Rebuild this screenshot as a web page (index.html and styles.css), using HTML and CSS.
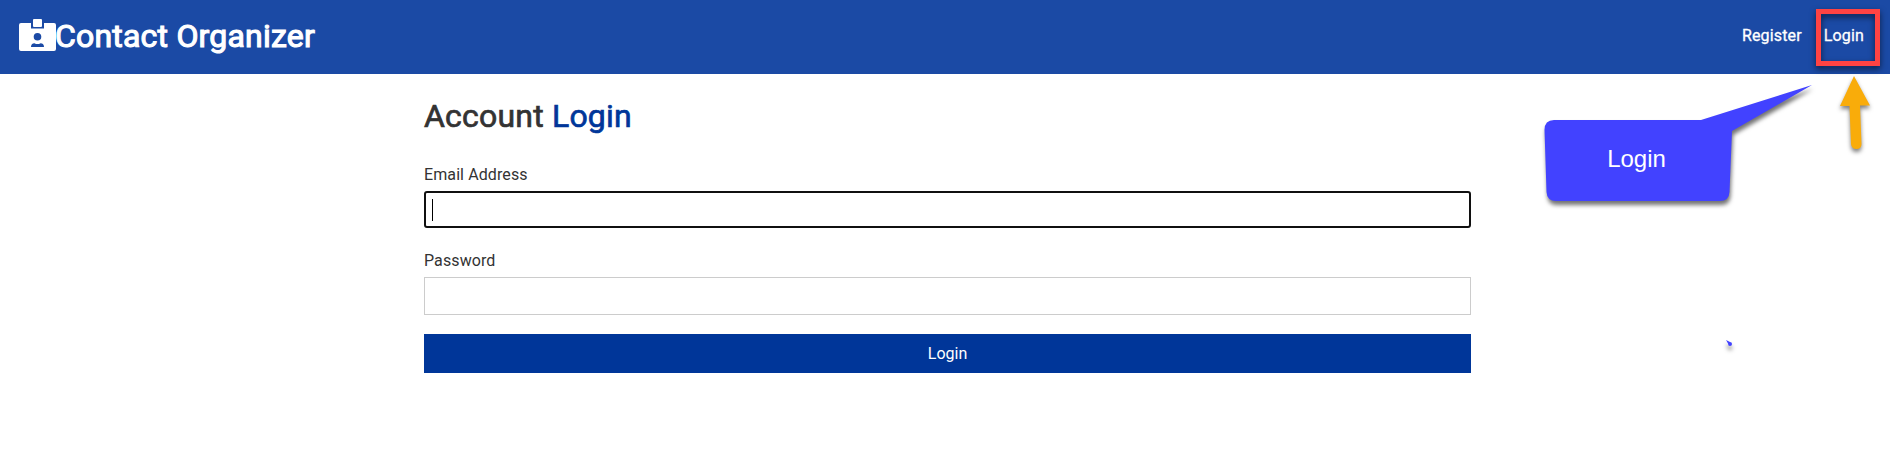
FILE: index.html
```html
<!DOCTYPE html>
<html lang="en">
<head>
<meta charset="utf-8">
<title>Contact Organizer</title>
<link rel="stylesheet" href="styles.css">
</head>
<body>
<header class="navbar">
  <h1 class="brand">
    <svg class="brand-icon" width="37" height="33" viewBox="0 0 37 33">
      <path fill="#fff" fill-rule="evenodd" d="M2 4H12V9.500H25V4H35Q37 4 37 6V30Q37 32 35 32H2Q0 32 0 30V6Q0 4 2 4ZM18.500 14A3.800 3.800 0 1 0 18.500 21.600A3.800 3.800 0 1 0 18.500 14ZM12 28H25Q25 24.400 21.500 24.200Q18.500 26 15.500 24.200Q12 24.400 12 28Z"/>
      <rect x="14" y="0" width="9" height="8" rx="1" fill="#fff"/>
    </svg><span class="brand-name">Contact Organizer</span>
  </h1>
  <nav class="links"><a>Register</a><a>Login</a></nav>
</header>
<main class="form-container">
  <h1 class="title">Account <span class="accent">Login</span></h1>
  <form>
    <div class="group">
      <label>Email Address</label>
      <div class="field focused"><span class="caret"></span></div>
    </div>
    <div class="group">
      <label>Password</label>
      <div class="field"></div>
    </div>
    <button class="submit" type="button">Login</button>
  </form>
</main>
<div class="highlight"></div>
<svg class="annotations" width="1890" height="459" viewBox="0 0 1890 459">
  <path class="callout" d="M1554 120H1701L1812 85L1732 131L1729.500 192Q1729 201 1720 201H1556Q1547 201 1546.500 192L1544.500 130Q1544.500 120 1554 120Z"/>
  <path class="arrow" d="M1854 76L1870 105.500H1860L1861.500 144Q1861.500 149 1856.500 149Q1851.500 149 1851 144L1849.500 106H1840Z"/>
  <path class="speck" d="M1726 340L1730 342Q1732 342 1732 344Q1732 346 1730 346Q1728 346 1728 343.500Z"/>
  <text class="callout-text" x="1636.500" y="167" text-anchor="middle">Login</text>
</svg>
</body>
</html>
```
FILE: styles.css
```css
* { box-sizing: border-box; margin: 0; padding: 0; }
body {
  font: 16px/1.6 Roboto, sans-serif;
  color: #333;
  background: #fff;
  height: 459px;
  overflow: hidden;
}
.navbar {
  display: flex;
  align-items: center;
  justify-content: space-between;
  height: 74px;
  padding: 0 26px 4px 19px;
  background: #1b4aa5;
  color: #fff;
}
.brand { display: flex; align-items: center; font-size: 32px; font-weight: 400; line-height: 38px; }
.brand-name { -webkit-text-stroke: 1.1px #fff; padding-top: 1px; margin-left: -1px; letter-spacing: 0.2px; }
.links { display: flex; gap: 22px; padding-top: 2px; letter-spacing: 0.15px; -webkit-text-stroke: 0.3px #fff; }
.form-container { width: 1047px; margin: 23px 0 0 424px; }
.title { font-size: 32px; font-weight: 400; line-height: 38px; letter-spacing: 0.2px; -webkit-text-stroke: 0.7px currentColor; }
.accent { color: #003699; }
.group { margin-top: 19px; }
.group + .group { margin-top: 20px; }
.title + form { padding-top: 8px; }
label { display: block; height: 26px; margin-bottom: 3px; letter-spacing: 0.1px; }
.field { height: 38px; border: 1px solid #ccc; background: #fff; }
.focused { border: 2px solid #101010; border-radius: 3px; padding: 6px; height: 37px; }
.caret { display: block; width: 1px; height: 22px; background: #000; }
.submit {
  display: block;
  width: 100%;
  height: 39px;
  margin-top: 19px;
  border: 0;
  background: #003699;
  color: #fff;
  font: 16px Roboto, sans-serif;
}
.highlight {
  position: absolute;
  left: 1816px;
  top: 9px;
  width: 64px;
  height: 57px;
  border: 5px solid #ff4343;
  filter: drop-shadow(0 3px 3px rgba(0, 0, 0, .6));
}
.annotations { position: absolute; left: 0; top: 0; }
.callout { fill: #4242ff; filter: drop-shadow(1px 4px 2px rgba(0, 0, 0, .55)); }
.arrow { fill: #f9ac0a; filter: drop-shadow(0 3px 2px rgba(0, 0, 0, .5)); }
.speck { fill: #4242ff; filter: drop-shadow(0 4px 2px rgba(0, 0, 0, .5)); }
.callout-text { fill: #fff; font: 24px "Liberation Sans", Arial, sans-serif; }
```
